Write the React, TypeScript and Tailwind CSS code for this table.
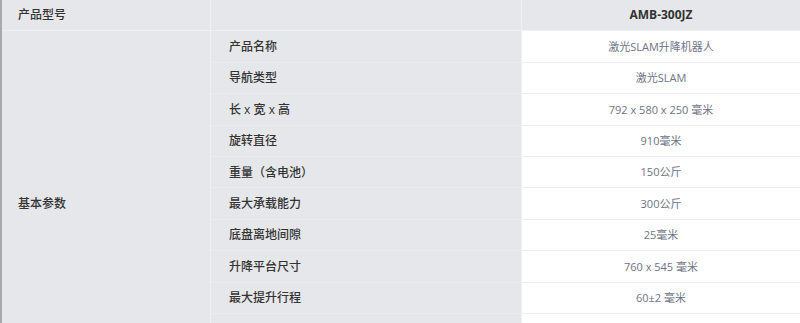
const params: [string, string][] = [
  ['产品名称', '激光SLAM升降机器人'],
  ['导航类型', '激光SLAM'],
  ['长 x 宽 x 高', '792 x 580 x 250 毫米'],
  ['旋转直径', '910毫米'],
  ['重量（含电池）', '150公斤'],
  ['最大承载能力', '300公斤'],
  ['底盘离地间隙', '25毫米'],
  ['升降平台尺寸', '760 x 545 毫米'],
  ['最大提升行程', '60±2 毫米'],
  ['', ''],
  ['', ''],
]

export default function App() {
  return (
    <div
      className="h-[323px] w-[800px] overflow-hidden bg-white"
      style={{ fontFamily: '"Open Sans", "Noto Sans CJK SC", sans-serif' }}
    >
      <div className="border-l-2 border-[#a9a9ab]">
        {/* header */}
        <div className="flex h-[31.4px] border-b border-[#f0f0f2] bg-[#e6e7ea]">
          <div className="flex w-[209px] items-center border-r border-[#f0f0f2] pl-4 text-[12px] font-medium text-[#333]">
            产品型号
          </div>
          <div className="w-[311px] border-r border-[#f0f0f2]" />
          <div className="flex flex-1 items-center justify-center bg-[#e6e7ea] text-[12px] font-bold text-[#333]">
            AMB-300JZ
          </div>
        </div>

        {/* 基本参数 */}
        <div className="flex">
          <div className="flex w-[209px] items-center border-r border-[#f0f0f2] bg-[#e6e7ea] pl-4 text-[12px] font-medium text-[#333]">
            基本参数
          </div>
          <div className="flex-1">
            {params.map(([label, value], i) => (
              <div key={i} className="flex h-[31.4px] border-b border-[#ececee]">
                <div className="flex w-[311px] items-center border-r border-[#f0f0f2] bg-[#e6e7ea] pl-[18px] pt-px text-[12px] font-medium text-[#333]">
                  {label}
                </div>
                <div className="flex flex-1 items-center justify-center bg-white pt-px text-[11px] text-[#6e7386]">
                  {value}
                </div>
              </div>
            ))}
          </div>
        </div>
      </div>
    </div>
  )
}
